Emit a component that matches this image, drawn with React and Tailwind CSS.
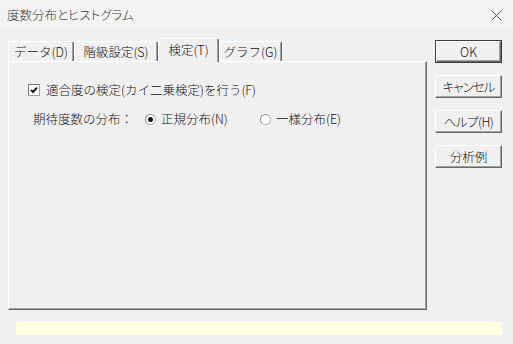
import React from "react";

const font = { fontFamily: '"Noto Sans CJK JP", "Noto Sans", sans-serif' };

function Tab({ label, width, selected }) {
  if (selected) {
    return (
      <div
        className={`relative z-10 mb-[-1px] h-[24px] ${width} flex items-start justify-center pt-[3px] bg-[#f0f0f0] border-t border-l border-white border-r border-r-[#696969] shadow-[inset_-1px_0_0_#a0a0a0] rounded-t-[2px] text-[12.5px] leading-[16px] text-[#111]`}
      >
        {label}
      </div>
    );
  }
  return (
    <div
      className={`h-[20px] ${width} flex items-center justify-center pt-[1px] bg-[#f0f0f0] border-t border-l border-white border-r border-r-[#696969] shadow-[inset_-1px_0_0_#a0a0a0] rounded-t-[2px] text-[12.5px] leading-[16px] text-[#111]`}
    >
      {label}
    </div>
  );
}

function Button({ children, isDefault, txt = "" }) {
  const base = `text-[12.5px] leading-[16px] text-[#111] ${txt}`;
  if (isDefault) {
    return (
      <div className="w-[67px] h-[23px] border border-[#3c3c3c] bg-[#f0f0f0]">
        <div className={`w-full h-full flex items-center justify-center border-t border-l border-white border-r border-b border-r-[#696969] border-b-[#696969] shadow-[inset_-1px_-1px_0_#a0a0a0] ${base}`}>
          {children}
        </div>
      </div>
    );
  }
  return (
    <div className={`w-[67px] h-[23px] flex items-center justify-center bg-[#f0f0f0] border-t border-l border-white border-r border-b border-r-[#696969] border-b-[#696969] shadow-[inset_-1px_-1px_0_#a0a0a0] ${base}`}>
      {children}
    </div>
  );
}

function Radio({ checked }) {
  return (
    <div className="w-[11px] h-[11px] rounded-full border border-[#b4b4b4] border-t-[#8a8a8a] border-l-[#8a8a8a] bg-white flex items-center justify-center">
      {checked && <div className="w-[5px] h-[5px] rounded-full bg-[#111]" />}
    </div>
  );
}

export default function App() {
  return (
    <div
      className="w-[513px] h-[344px] bg-[#f0f0f0] flex flex-col overflow-hidden text-[#111] font-light"
      style={font}
    >
      {/* Title bar */}
      <div className="h-[30px] bg-[#f3f3f3] flex items-center justify-between pl-[7px] pr-[11px]">
        <span className="text-[12.5px] leading-[16px] text-[#333] [font-feature-settings:'palt']">
          度数分布とヒストグラム
        </span>
        <svg width="11" height="11" viewBox="0 0 11 11">
          <path d="M0.5 0.5 L10.5 10.5 M10.5 0.5 L0.5 10.5" stroke="#555" strokeWidth="1" fill="none" />
        </svg>
      </div>

      {/* Body */}
      <div className="flex pt-[8px]">
        <div className="ml-[8px] w-[419px] flex flex-col">
          <div className="h-[23px] flex items-end">
            <Tab label="データ(D)" width="w-[66px]" />
            <Tab label="階級設定(S)" width="w-[84px]" />
            <Tab label="検定(T)" width="w-[61px]" selected />
            <Tab label="グラフ(G)" width="w-[63px]" />
          </div>
          <div className="h-[249px] border-t border-l border-white border-r border-b border-r-[#696969] border-b-[#696969] shadow-[inset_-1px_-1px_0_#a0a0a0] flex flex-col pt-[20px]">
            <div className="h-[16px] flex items-center pl-[19px]">
              <div className="w-[12px] h-[12px] border border-[#a0a0a0] border-t-[#7a7a7a] border-l-[#7a7a7a] bg-white flex items-center justify-center">
                <svg width="10" height="10" viewBox="0 0 10 10">
                  <path d="M2 4.8 L4 7 L8 2.6" stroke="#111" strokeWidth="1.9" fill="none" />
                </svg>
              </div>
              <span className="ml-[6px] text-[12.5px] leading-[16px]">
                適合度の検定(カイ二乗検定)を行う(F)
              </span>
            </div>
            <div className="mt-[13px] h-[16px] flex items-center pl-[24px]">
              <span className="w-[112px] text-[12.5px] leading-[16px]">期待度数の分布：</span>
              <div className="w-[115px] flex items-center">
                <Radio checked />
                <span className="ml-[5px] text-[12.5px] leading-[16px]">正規分布(N)</span>
              </div>
              <div className="flex items-center">
                <Radio />
                <span className="ml-[5px] text-[12.5px] leading-[16px]">一様分布(E)</span>
              </div>
            </div>
          </div>
        </div>

        <div className="ml-[8px] pt-[2px] flex flex-col gap-[12px]">
          <Button isDefault>OK</Button>
          <Button txt="tracking-[-1px] [font-feature-settings:'palt']">キャンセル</Button>
          <Button txt="tracking-[-0.5px] [font-feature-settings:'palt']">ヘルプ(H)</Button>
          <Button>分析例</Button>
        </div>
      </div>

      <div className="mt-[12px] ml-[16px] w-[486px] h-[13px] bg-[#ffffe1]" />
    </div>
  );
}
